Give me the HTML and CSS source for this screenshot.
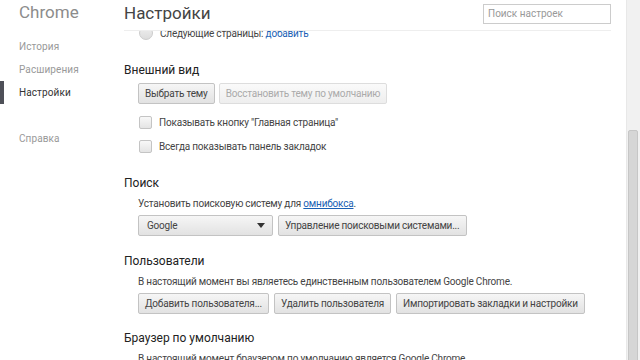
FILE: index.html
```html
<!DOCTYPE html>
<html lang="ru">
<head>
    <meta charset="UTF-8">
    <title>Настройки</title>
    <link rel="stylesheet" href="styles.css">
</head>
<body>

<div class="page">
    <div class="sidebar">
        <h1 class="brand">Chrome</h1>
        <ul class="nav">
            <li>История</li>
            <li>Расширения</li>
            <li class="active">Настройки</li>
            <li class="nav-gap">Справка</li>
        </ul>
    </div>

    <div class="main">
        <div class="header">
            <h2>Настройки</h2>
            <input class="search" type="text" placeholder="Поиск настроек">
        </div>

        <div class="content">
            <div class="inner">
                <div class="row first-row">
                    <span class="radio"></span>
                    <span>Следующие страницы: <a href="#">добавить</a></span>
                </div>

                <div class="section">
                    <h3>Внешний вид</h3>
                    <div class="buttons tight">
                        <button>Выбрать тему</button>
                        <button disabled>Восстановить тему по умолчанию</button>
                    </div>
                    <div class="checks">
                        <div class="row"><span class="checkbox"></span>Показывать кнопку "Главная страница"</div>
                        <div class="row"><span class="checkbox"></span>Всегда показывать панель закладок</div>
                    </div>
                </div>

                <div class="section">
                    <h3>Поиск</h3>
                    <p class="text">Установить поисковую систему для <a href="#">омнибокса</a>.</p>
                    <div class="buttons">
                        <div class="select">Google<span class="arrow"></span></div>
                        <button>Управление поисковыми системами...</button>
                    </div>
                </div>

                <div class="section">
                    <h3>Пользователи</h3>
                    <p class="text">В настоящий момент вы являетесь единственным пользователем Google Chrome.</p>
                    <div class="buttons">
                        <button>Добавить пользователя...</button>
                        <button>Удалить пользователя</button>
                        <button>Импортировать закладки и настройки</button>
                    </div>
                </div>

                <div class="section last">
                    <h3>Браузер по умолчанию</h3>
                    <p class="text">В настоящий момент браузером по умолчанию является Google Chrome.</p>
                </div>
            </div>
        </div>
    </div>

    <div class="scrollbar">
        <div class="thumb"></div>
    </div>
</div>

</body>
</html>
```

FILE: styles.css
```css
body {
    margin: 0;
    font-family: Roboto, "Noto Sans", sans-serif;
    background: #fff;
    color: #333;
}

.page {
    display: flex;
    width: 640px;
    height: 360px;
    overflow: hidden;
}

/* боковая панель */
.sidebar {
    width: 124px;
    flex-shrink: 0;
}

.brand {
    margin: 0;
    padding: 1px 0 0 19px;
    height: 30px;
    font-size: 17px;
    font-weight: normal;
    color: #8c8c8c;
    line-height: 22px;
}

.nav {
    list-style: none;
    margin: 4px 0 0;
    padding: 0;
}

.nav li {
    height: 23px;
    line-height: 23px;
    padding-left: 19px;
    font-size: 10px;
    letter-spacing: 0.1px;
    color: #999;
}

.nav li.active {
    color: #333;
    box-shadow: inset 4px 0 0 #4e5058;
}

.nav li.nav-gap {
    margin-top: 23px;
}

/* основная часть */
.main {
    flex: 1;
    display: flex;
    flex-direction: column;
    min-width: 0;
}

.header {
    display: flex;
    justify-content: space-between;
    align-items: center;
    height: 30px;
    margin-right: 15px;
    border-bottom: 1px solid #eee;
}

.header h2 {
    margin: -5px 0 0;
    font-size: 17px;
    font-weight: normal;
    color: #444;
}

.search {
    width: 128px;
    height: 20px;
    box-sizing: border-box;
    border: 1px solid #ccc;
    padding: 0 4px;
    font-family: inherit;
    font-size: 10px;
    margin-top: -3px;
}

.search::placeholder {
    color: #999;
}

.content {
    flex: 1;
    overflow: hidden;
}

.inner {
    margin-top: -10px;
}

.row {
    display: flex;
    align-items: center;
    height: 24px;
    padding-left: 15px;
    font-size: 10px;
    letter-spacing: -0.2px;
    color: #444;
    white-space: nowrap;
}

.radio {
    width: 12px;
    height: 12px;
    border-radius: 50%;
    border: 1px solid #ccc;
    background: linear-gradient(#eee, #ddd);
    margin-right: 7px;
}

.checkbox {
    width: 11px;
    height: 11px;
    border: 1px solid #c4c4c4;
    border-radius: 2px;
    background: linear-gradient(#f8f8f8, #e4e4e4);
    margin-right: 7px;
}

a {
    color: #1a5fb4;
}

.row a {
    text-decoration: none;
}

.section {
    margin-top: 15px;
}

.section.last {
    margin-top: 14px;
}

.section h3 {
    margin: 0;
    height: 20px;
    line-height: 20px;
    font-size: 12px;
    font-weight: normal;
    color: #222;
}

.text {
    margin: 1px 0 0;
    padding-left: 14px;
    height: 20px;
    line-height: 20px;
    font-size: 10px;
    letter-spacing: -0.2px;
    color: #444;
    white-space: nowrap;
}

.buttons {
    display: flex;
    gap: 5px;
    margin-top: 1px;
    padding-left: 14px;
}

.buttons.tight {
    margin-top: 3px;
    gap: 4px;
}

.checks {
    margin-top: 6px;
}

button, .select {
    height: 21px;
    box-sizing: border-box;
    padding: 0 6px;
    border: 1px solid #c3c3c3;
    border-radius: 2px;
    background: linear-gradient(#f6f6f6, #e2e2e2);
    font-family: inherit;
    font-size: 10px;
    letter-spacing: -0.2px;
    color: #444;
    white-space: nowrap;
}

button:disabled {
    color: #aaa;
    border-color: #ddd;
    background: linear-gradient(#fafafa, #eee);
}

.select {
    display: flex;
    align-items: center;
    justify-content: space-between;
    width: 135px;
    padding: 0 8px;
}

.arrow {
    width: 0;
    height: 0;
    border-left: 4px solid transparent;
    border-right: 4px solid transparent;
    border-top: 5px solid #333;
    margin-right: -1px;
}

/* полоса прокрутки */
.scrollbar {
    width: 13px;
    flex-shrink: 0;
    background: #f1f1f1;
    border-left: 1px solid #e8e8e8;
    padding-top: 130px;
}

.thumb {
    height: 240px;
    margin: 0 2px 0 1px;
    background: #d6d6d6;
    border: 1px solid #c6c6c6;
    border-radius: 2px;
}
```
